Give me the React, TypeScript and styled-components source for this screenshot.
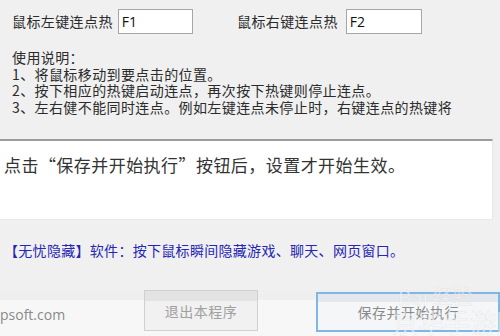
import React from "react";
import styled, { createGlobalStyle } from "styled-components";

const Global = createGlobalStyle`
  html, body { margin: 0; padding: 0; background: #f0f0f0; }
  body { width: 500px; height: 336px; overflow: hidden; }
  #root { width: 500px; height: 336px; }
`;

const FONT = `"Noto Sans CJK SC", "Microsoft YaHei", sans-serif`;

const Window = styled.div`
  position: relative;
  width: 500px;
  height: 336px;
  background: #f0f0f0;
  display: flex;
  flex-direction: column;
  font-family: ${FONT};
  color: #2b2b2b;
  overflow: hidden;
`;

const HotkeyRow = styled.div`
  display: flex;
  align-items: center;
  margin-top: 9px;
  height: 25px;
  padding-left: 12px;
`;

const HotkeyGroup = styled.div<{ $width: number; $gap: number }>`
  display: flex;
  align-items: center;
  gap: ${(p) => p.$gap}px;
  width: ${(p) => p.$width}px;
`;

const Label = styled.span`
  font-size: 14px;
  line-height: 17px;
  letter-spacing: 0.4px;
  white-space: nowrap;
`;

const KeyInput = styled.div<{ $width: number }>`
  box-sizing: border-box;
  width: ${(p) => p.$width}px;
  height: 25px;
  background: #ffffff;
  border: 1px solid #a6a6a6;
  font-family: "Open Sans", "Liberation Sans", sans-serif;
  font-size: 14px;
  line-height: 23px;
  padding-left: 3px;
  color: #111;
`;

const Instructions = styled.div`
  margin-top: 15px;
  padding-left: 12px;
  font-size: 14px;
  line-height: 16.5px;
  letter-spacing: 0.4px;
  white-space: nowrap;
`;

const NoticeBox = styled.div`
  box-sizing: border-box;
  margin-top: 24px;
  width: 493px;
  height: 81px;
  background: #ffffff;
  border-top: 2px solid #9c9c9c;
  border-right: 1px solid #e6e6e6;
  border-bottom: 1px solid #e8e8e8;
  padding: 14px 0 0 4px;
  font-size: 17px;
  line-height: 20px;
  letter-spacing: 0.45px;
  color: #333;
  white-space: nowrap;
`;

const PromoLine = styled.div`
  margin-top: 22px;
  padding-left: 4px;
  font-size: 14px;
  line-height: 17px;
  letter-spacing: 0.3px;
  color: #2626b4;
  white-space: nowrap;
`;

const Footer = styled.div`
  margin-top: 31px;
  flex: 1;
  display: flex;
  align-items: flex-start;
  background: linear-gradient(#efefef 0, #efefef 10px, #f7f7f7 10px);
`;

const Site = styled.span`
  width: 144px;
  margin-top: 16px;
  font-family: "Open Sans", "Liberation Sans", sans-serif;
  font-size: 14px;
  line-height: 18px;
  color: #8a8a8a;
`;

const Button = styled.div<{ $primary?: boolean; $width: number }>`
  box-sizing: border-box;
  width: ${(p) => p.$width}px;
  height: ${(p) => (p.$primary ? 40 : 41)}px;
  margin-top: ${(p) => (p.$primary ? 2 : 0)}px;
  display: flex;
  align-items: center;
  justify-content: center;
  font-size: 14px;
  color: ${(p) => (p.$primary ? "#8a8a8a" : "#a0a0a0")};
  border: ${(p) => (p.$primary ? "2px solid #7fb6e8" : "1px solid #d0d0d0")};
  background: ${(p) =>
    p.$primary
      ? "linear-gradient(#e4e8ec 0, #e4e8ec 8px, #f4f6f8 8px)"
      : "linear-gradient(#e3e3e3 0, #e3e3e3 10px, #f1f1f1 10px)"};
  letter-spacing: 0.5px;
`;

const Spacer = styled.div<{ $w: number }>`
  width: ${(p) => p.$w}px;
  flex-shrink: 0;
`;

const Watermark = styled.span<{ $size: number }>`
  position: absolute;
  font-family: ${FONT};
  font-size: ${(p) => p.$size}px;
  color: rgba(255, 255, 255, 0.5);
  -webkit-text-stroke: 0.5px rgba(200, 200, 200, 0.4);
  white-space: nowrap;
  pointer-events: none;
`;

export default function App() {
  return (
    <>
      <Global />
      <Window>
        <HotkeyRow>
          <HotkeyGroup $width={225} $gap={5}>
            <Label>鼠标左键连点热</Label>
            <KeyInput $width={75}>F1</KeyInput>
          </HotkeyGroup>
          <HotkeyGroup $width={200} $gap={8}>
            <Label>鼠标右键连点热</Label>
            <KeyInput $width={76}>F2</KeyInput>
          </HotkeyGroup>
        </HotkeyRow>
        <Instructions>
          <div>使用说明：</div>
          <div>1、将鼠标移动到要点击的位置。</div>
          <div>2、按下相应的热键启动连点，再次按下热键则停止连点。</div>
          <div>3、左右健不能同时连点。例如左键连点未停止时，右键连点的热键将</div>
        </Instructions>
        <NoticeBox>点击“保存并开始执行”按钮后，设置才开始生效。</NoticeBox>
        <PromoLine>【无忧隐藏】软件：按下鼠标瞬间隐藏游戏、聊天、网页窗口。</PromoLine>
        <Footer>
          <Site>psoft.com</Site>
          <Button $width={115}>退出本程序</Button>
          <Spacer $w={58} />
          <Button $primary $width={184}>保存并开始执行</Button>
        </Footer>
        <Watermark $size={20} style={{ left: 398, top: 282 }}>Bai 经验</Watermark>
        <Watermark $size={26} style={{ left: 392, top: 303 }}>京华手游网</Watermark>
      </Window>
    </>
  );
}
